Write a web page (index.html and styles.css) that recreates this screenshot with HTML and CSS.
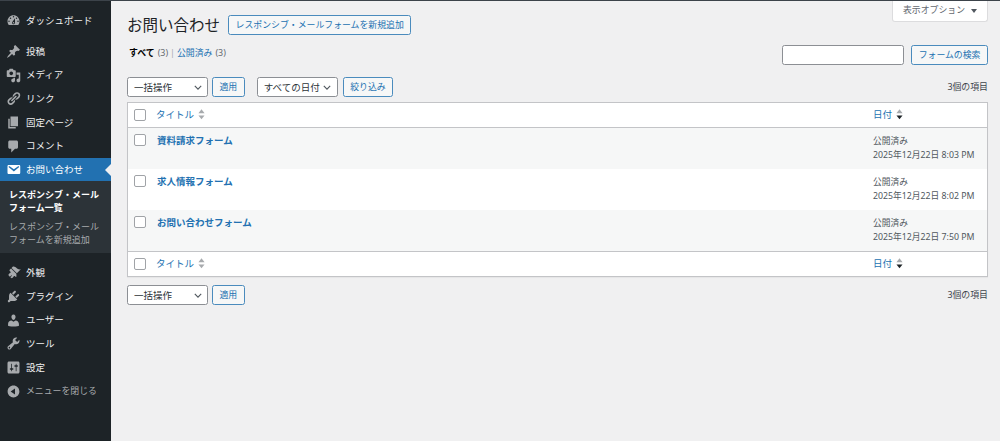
FILE: index.html
```html
<!DOCTYPE html>
<html lang="ja">
<head>
<meta charset="utf-8">
<title>お問い合わせ</title>
<link rel="stylesheet" href="styles.css">
</head>
<body>
<div class="app">
<nav class="side">
  <a class="item first"><svg viewBox="0 0 20 20"><path d="M3.76 16h12.48c1.1-1.37 1.76-3.11 1.76-5 0-4.42-3.58-8-8-8s-8 3.58-8 8c0 1.89.66 3.63 1.76 5zM10 4c.55 0 1 .45 1 1s-.45 1-1 1-1-.45-1-1 .45-1 1-1zM6 6c.55 0 1 .45 1 1s-.45 1-1 1-1-.45-1-1 .45-1 1-1zm8 0c.55 0 1 .45 1 1s-.45 1-1 1-1-.45-1-1 .45-1 1-1zm-5.37 5.55L12 7v6c0 1.1-.9 2-2 2s-2-.9-2-2c0-.57.24-1.08.63-1.45zM4 10c.55 0 1 .45 1 1s-.45 1-1 1-1-.45-1-1 .45-1 1-1zm12 0c.55 0 1 .45 1 1s-.45 1-1 1-1-.45-1-1 .45-1 1-1zm-5 3c0-.55-.45-1-1-1s-1 .45-1 1 .45 1 1 1 1-.45 1-1z"/></svg>ダッシュボード</a>
  <div class="sep"></div>
  <a class="item"><svg viewBox="0 0 20 20"><path d="M10.44 3.02l1.82-1.82 6.36 6.35-1.83 1.82c-1.05-.68-2.48-.57-3.41.36l-.75.75c-.92.93-1.04 2.35-.35 3.41l-1.83 1.82-2.41-2.41-2.8 2.79c-.42.42-3.38 2.71-3.8 2.29s1.86-3.39 2.28-3.81l2.79-2.79L4.1 9.36l1.83-1.82c1.05.69 2.48.57 3.4-.36l.75-.75c.93-.92 1.05-2.35.36-3.41z"/></svg>投稿</a>
  <a class="item"><svg viewBox="0 0 20 20"><path d="M13 11V4c0-.55-.45-1-1-1h-1.67L9 1H5L3.67 3H2c-.55 0-1 .45-1 1v7c0 .55.45 1 1 1h10c.55 0 1-.45 1-1zM7 4.5c1.38 0 2.5 1.12 2.5 2.5S8.38 9.5 7 9.5 4.5 8.38 4.5 7 5.62 4.5 7 4.5zM14 6h5v10.5c0 1.38-1.12 2.5-2.5 2.5S14 17.88 14 16.5s1.12-2.5 2.5-2.5c.17 0 .34.02.5.05V9h-3V6zm-4 8.05V13h2v3.5c0 1.38-1.12 2.5-2.5 2.5S7 17.88 7 16.5 8.12 14 9.5 14c.17 0 .34.02.5.05z"/></svg>メディア</a>
  <a class="item"><svg viewBox="0 0 20 20"><path d="M17.74 2.76c1.68 1.69 1.68 4.41 0 6.1l-1.53 1.52c-1.12 1.12-2.7 1.47-4.14 1.09l2.62-2.61.76-.77.76-.76c.84-.84.84-2.2 0-3.04-.84-.85-2.2-.85-3.04 0l-.77.76-3.38 3.38c-.37-1.44-.02-3.02 1.1-4.14l1.52-1.53c1.69-1.68 4.42-1.68 6.1 0zM8.59 13.43l5.34-5.34c.42-.42.42-1.1 0-1.52-.44-.43-1.13-.39-1.53 0l-5.33 5.34c-.42.42-.42 1.1 0 1.52.44.43 1.13.39 1.52 0zm-.76 2.29l4.14-4.15c.38 1.44.03 3.02-1.09 4.14l-1.52 1.53c-1.69 1.68-4.41 1.68-6.1 0-1.68-1.68-1.68-4.42 0-6.1l1.53-1.52c1.12-1.12 2.7-1.47 4.14-1.1l-4.14 4.15c-.85.84-.85 2.2 0 3.05.84.84 2.2.84 3.04 0z"/></svg>リンク</a>
  <a class="item"><svg viewBox="0 0 20 20"><path d="M6 15V2h10v13H6zm-1 1h8v2H3V5h2v11z"/></svg>固定ページ</a>
  <a class="item"><svg viewBox="0 0 20 20"><path d="M5 2h9c1.1 0 2 .9 2 2v7c0 1.1-.9 2-2 2h-2l-5 5v-5H5c-1.1 0-2-.9-2-2V4c0-1.1.9-2 2-2z"/></svg>コメント</a>
  <a class="item active"><svg viewBox="0 0 20 20"><path d="M3.87 4h13.25C18.37 4 19 4.59 19 5.79v8.42c0 1.19-.63 1.79-1.88 1.79H3.87c-1.25 0-1.88-.6-1.88-1.79V5.79c0-1.2.63-1.79 1.88-1.79zm6.62 8.6l6.74-5.53c.24-.2.43-.66.13-1.07-.29-.41-.82-.42-1.17-.17l-5.7 3.86L4.8 5.83c-.35-.25-.88-.24-1.17.17-.3.41-.11.87.13 1.07z"/></svg>お問い合わせ</a>
  <div class="sub">
    <a class="cur">レスポンシブ・メール<br>フォーム一覧</a>
    <a>レスポンシブ・メール<br>フォームを新規追加</a>
  </div>
  <div class="sep small"></div>
  <a class="item"><svg viewBox="0 0 20 20"><path d="M14.48 11.06L7.41 3.99l1.5-1.5c.5-.56 2.3-.47 3.51.32 1.21.8 1.43 1.28 2.91 2.1 1.18.64 2.45 1.26 4.45.85zm-.71.71L6.7 4.7 4.93 6.47c-.39.39-.39 1.02 0 1.41l1.06 1.06c.39.39.39 1.03 0 1.42-.6.6-1.6 1.06-2.21 1.67-.61.6-.61 1.6 0 2.21l1.42 1.42 2.12-2.12.7.7-2.12 2.12.7.71c.61.61 1.61.61 2.21 0 .61-.6 1.07-1.61 1.67-2.21.39-.39 1.03-.39 1.42 0l.65.65c.39.39 1.02.39 1.41 0z"/></svg>外観</a>
  <a class="item"><svg viewBox="0 0 20 20"><path d="M13.11 4.36L9.87 7.6 8 5.73l3.24-3.24c.35-.34 1.05-.2 1.56.32.52.51.66 1.21.31 1.55zm-8 1.77l.91-1.12 9.01 9.01-1.19.84c-.71.71-2.63 1.16-3.82 1.16H6.14L4.9 17.26c-.59.59-1.54.59-2.12 0-.59-.58-.59-1.53 0-2.12l1.24-1.24v-3.88c0-1.13.4-3.19 1.09-3.89zm7.26 3.97l3.24-3.24c.34-.35 1.04-.21 1.55.31.52.51.66 1.21.31 1.55l-3.24 3.25z"/></svg>プラグイン</a>
  <a class="item"><svg viewBox="0 0 20 20"><path d="M10 9.25c-2.27 0-2.73-3.44-2.73-3.44C7 4.02 7.82 2 9.97 2c2.16 0 2.98 2.02 2.71 3.81 0 0-.41 3.44-2.68 3.44zm0 2.57L12.72 10c2.39 0 4.52 2.33 4.52 4.53v2.49s-3.65 1.13-7.24 1.13c-3.65 0-7.24-1.13-7.24-1.13v-2.49c0-2.25 1.94-4.48 4.47-4.48z"/></svg>ユーザー</a>
  <a class="item"><svg viewBox="0 0 20 20"><path d="M16.68 9.77c-1.34 1.34-3.3 1.67-4.95.99l-5.41 6.52c-.99.99-2.59.99-3.58 0s-.99-2.59 0-3.57l6.52-5.42c-.68-1.65-.35-3.61.99-4.95 1.28-1.28 3.12-1.62 4.72-1.06l-2.89 2.89 2.82 2.82 2.86-2.87c.53 1.58.18 3.39-1.08 4.65zM3.81 16.21c.4.39 1.04.39 1.43 0 .4-.4.4-1.04 0-1.43-.39-.4-1.03-.4-1.43 0-.39.39-.39 1.03 0 1.43z"/></svg>ツール</a>
  <a class="item"><svg viewBox="0 0 20 20"><path d="M18 16V4c0-1.1-.9-2-2-2H4c-1.1 0-2 .9-2 2v12c0 1.1.9 2 2 2h12c1.1 0 2-.9 2-2zM8 11h1c.55 0 1 .45 1 1s-.45 1-1 1H8v1.5c0 .28-.22.5-.5.5s-.5-.22-.5-.5V13H6c-.55 0-1-.45-1-1s.45-1 1-1h1V5.5c0-.28.22-.5.5-.5s.5.22.5.5V11zm5-2h-1c-.55 0-1-.45-1-1s.45-1 1-1h1V5.5c0-.28.22-.5.5-.5s.5.22.5.5V7h1c.55 0 1 .45 1 1s-.45 1-1 1h-1v5.5c0 .28-.22.5-.5.5s-.5-.22-.5-.5V9z"/></svg>設定</a>
  <a class="item close"><svg viewBox="0 0 20 20"><path d="M10 2.16c4.33 0 7.84 3.51 7.84 7.84s-3.51 7.84-7.84 7.84S2.16 14.33 2.16 10 5.71 2.16 10 2.16zm2 11.72V6.12L6.18 9.97z"/></svg>メニューを閉じる</a>
</nav>
<main class="main">
  <div class="tab">表示オプション<span class="tri"></span></div>
  <div class="head">
    <h1>お問い合わせ</h1>
    <a class="btn">レスポンシブ・メールフォームを新規追加</a>
  </div>
  <div class="filter-row">
    <div class="views"><b>すべて</b> <span class="cnt">(3)</span><span class="bar">|</span><a>公開済み</a> <span class="cnt">(3)</span></div>
    <div class="search"><input class="input" type="text"><a class="btn">フォームの検索</a></div>
  </div>
  <div class="nav">
    <select class="sel bulk"><option>一括操作</option></select>
    <a class="btn">適用</a>
    <select class="sel date"><option>すべての日付</option></select>
    <a class="btn">絞り込み</a>
    <span class="num">3個の項目</span>
  </div>
  <table class="tbl">
    <thead>
      <tr><td class="ck"><span class="box"></span></td><td class="ttl"><a>タイトル</a><svg class="sort" viewBox="0 0 8 12"><path class="u" d="M4 0l3.5 4.5h-7z"/><path class="u" d="M4 11.5L.5 7h7z"/></svg></td><td class="dt"><a>日付</a><svg class="sort" viewBox="0 0 8 12"><path class="u" d="M4 0l3.5 4.5h-7z"/><path class="k" d="M4 11.5L.5 7h7z"/></svg></td></tr>
    </thead>
    <tbody>
      <tr class="alt"><td class="ck"><span class="box"></span></td><td class="ttl"><a class="nm">資料請求フォーム</a></td><td class="dt">公開済み<br>2025年12月22日 8:03 PM</td></tr>
      <tr><td class="ck"><span class="box"></span></td><td class="ttl"><a class="nm">求人情報フォーム</a></td><td class="dt">公開済み<br>2025年12月22日 8:02 PM</td></tr>
      <tr class="alt"><td class="ck"><span class="box"></span></td><td class="ttl"><a class="nm">お問い合わせフォーム</a></td><td class="dt">公開済み<br>2025年12月22日 7:50 PM</td></tr>
    </tbody>
    <tfoot>
      <tr><td class="ck"><span class="box"></span></td><td class="ttl"><a>タイトル</a><svg class="sort" viewBox="0 0 8 12"><path class="u" d="M4 0l3.5 4.5h-7z"/><path class="u" d="M4 11.5L.5 7h7z"/></svg></td><td class="dt"><a>日付</a><svg class="sort" viewBox="0 0 8 12"><path class="u" d="M4 0l3.5 4.5h-7z"/><path class="k" d="M4 11.5L.5 7h7z"/></svg></td></tr>
    </tfoot>
  </table>
  <div class="nav bottom">
    <select class="sel bulk"><option>一括操作</option></select>
    <a class="btn">適用</a>
    <span class="num">3個の項目</span>
  </div>
</main>
</div>
</body>
</html>
```
FILE: styles.css
```css
* { box-sizing: border-box; }
html, body { margin: 0; height: 441px; overflow: hidden; }
body {
  background: #f0f0f1;
  border-top: 1px solid #3c434a;
  color: #3c434a;
  font: 9.5px/1.4 "Noto Sans", "Noto Sans CJK JP", sans-serif;
}
.app { display: flex; height: 440px; }
.side { width: 111px; flex: none; background: #1d2327; }
.item {
  display: flex;
  align-items: center;
  height: 23.65px;
  padding-left: 5.5px;
  gap: 5.5px;
  color: #f0f0f1;
  font-size: 9.5px;
  position: relative;
}
.item.first { margin-top: 7.5px; }
.item svg { width: 15px; height: 15px; fill: #a7aaad; flex: none; }
.sep { height: 7.5px; }
.sep.small { height: 7.5px; }
.active { background: #2271b1; color: #fff; }
.active svg { fill: #fff; }
.active::after {
  content: "";
  position: absolute;
  right: 0;
  top: 6px;
  border: 6px solid transparent;
  border-right-color: #f0f0f1;
  border-left: 0;
}
.sub { background: #2c3338; height: 72px; padding: 6.5px 0 0 9px; display: flex; flex-direction: column; gap: 6px; }
.sub a { color: #a7aaad; font-size: 9px; line-height: 13px; display: block; white-space: nowrap; }
.sub a.cur { color: #fff; font-weight: 700; }
.item.close { color: #a7aaad; font-size: 8.9px; }
.main { flex: 1; padding: 0 12px 0 16px; position: relative; min-width: 0; }
.tab {
  position: absolute;
  top: -1px;
  right: 12px;
  width: 96px;
  height: 22px;
  background: #fff;
  border: 1px solid #dcdcde;
  border-top: 0;
  border-radius: 0 0 3px 3px;
  display: flex;
  align-items: center;
  justify-content: center;
  gap: 6px;
  color: #646970;
  font-size: 8.9px;
}
.tri { border: 3px solid transparent; border-top: 4px solid #50575e; border-bottom: 0; }
.head { display: flex; align-items: center; gap: 8px; height: 20px; margin-top: 14px; }
h1 { margin: 0; font-size: 15.5px; font-weight: 400; color: #1d2327; line-height: 20px; }
.btn {
  display: inline-flex;
  align-items: center;
  height: 20px;
  padding: 0 6.5px;
  color: #2271b1;
  background: #f6f7f7;
  border: 1px solid #4a8bbd;
  border-radius: 2.5px;
  font-size: 8.9px;
  white-space: nowrap;
}
.filter-row { display: flex; justify-content: space-between; align-items: flex-start; margin-top: 10px; }
.views { display: flex; gap: 3px; align-items: center; font-size: 8.9px; height: 14px; margin: 1px 0 0 2px; color: #646970; }
.views b { color: #000; }
.views a { color: #2271b1; }
.cnt { color: #646970; }
.bar { color: #a7aaad; margin: 0 -1px; }
.search { display: flex; gap: 7px; }
.input { width: 122px; height: 20px; border: 1px solid #8c8f94; border-radius: 2.5px; background: #fff; padding: 0; }
.nav { display: flex; align-items: center; gap: 4px; margin-top: 12px; height: 20px; }
.sel {
  appearance: none;
  height: 20px;
  width: 81px;
  padding: 0 6px;
  border: 1px solid #8c8f94;
  border-radius: 2.5px;
  color: #2c3338;
  font: 9.5px "Noto Sans", "Noto Sans CJK JP", sans-serif;
  background: #fff url("data:image/svg+xml,%3Csvg xmlns='http://www.w3.org/2000/svg' viewBox='0 0 10 6'%3E%3Cpath d='M1 1l4 4 4-4' fill='none' stroke='%2350575e' stroke-width='1.4'/%3E%3C/svg%3E") no-repeat right 5.5px center / 8px 5px;
}
.date { margin: 0 1px 0 8px; }
.num { margin-left: auto; color: #3c434a; font-size: 8.9px; }
.tbl {
  width: 100%;
  margin-top: 5px;
  border-collapse: separate;
  border-spacing: 0;
  background: #fff;
  border: 1px solid #c3c4c7;
  box-shadow: 0 1px 1px rgba(0,0,0,.04);
  table-layout: fixed;
}
.tbl td { padding: 0; vertical-align: top; }
thead td { height: 25px; border-bottom: 1px solid #c3c4c7; vertical-align: middle !important; }
tfoot td { height: 25px; border-top: 1px solid #c3c4c7; vertical-align: middle !important; }
tbody td { height: 41px; padding-top: 5px !important; line-height: 16px; }
.alt td { background: #f6f7f7; }
.ck { width: 28px; }
.box {
  display: block;
  width: 12px;
  height: 12px;
  margin-left: 6px;
  background: #fff;
  border: 1px solid #a0a3a7;
  border-radius: 2px;
}
tbody .box { margin-top: 1px; }
.ttl a { color: #2271b1; font-size: 9.5px; }
.ttl .nm { font-weight: 700; margin-left: 1px; }
.dt { width: 114px; font-size: 8.75px; color: #50575e; }
tbody .dt { line-height: 14px; padding-top: 6px !important; }
.dt a { color: #2271b1; font-size: 9.5px; }
.sort { width: 7px; height: 11px; margin-left: 4px; vertical-align: -2px; }
.u { fill: #a7aaad; }
.k { fill: #1d2327; }
.bottom { margin-top: 8px; }
```
